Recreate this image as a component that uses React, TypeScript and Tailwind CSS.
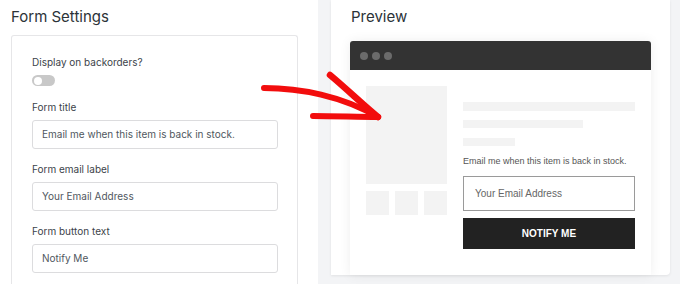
import React from "react";

function Field({ label, value }: { label: string; value: string }) {
  return (
    <div className="flex flex-col">
      <div className="text-[10px] leading-[14px] text-[#3c434a]">{label}</div>
      <div className="mt-[6px] flex h-[29px] w-[246px] items-center rounded-[3px] border border-[#dcdcde] bg-white pl-[9px] text-[10px] text-[#50575e]">
        {value}
      </div>
    </div>
  );
}

function Arrow() {
  return (
    <svg
      className="pointer-events-none absolute left-0 top-0"
      width="680"
      height="284"
      viewBox="0 0 680 284"
    >
      <g fill="none" stroke="#f20d0d" strokeLinecap="round" strokeLinejoin="round">
        <path strokeWidth="6" d="M264 88 C 300 88, 342 96, 378 117" />
        <path strokeWidth="6.5" d="M330 75 C 348 90, 362 104, 378 117" />
        <path strokeWidth="6" d="M313 116 C 335 116, 358 117, 378 117" />
      </g>
    </svg>
  );
}

export default function App() {
  return (
    <div
      className="relative flex h-[284px] w-[680px] overflow-hidden bg-[#f3f4f6]"
      style={{ fontFamily: "Inter, 'Liberation Sans', sans-serif" }}
    >
      <div className="flex h-full w-[318px] flex-col bg-white pl-[11px] pt-[7px]">
        <h2 className="text-[15px] leading-[20px] text-[#2c3338]">Form Settings</h2>
        <div className="mt-[8px] flex w-[287px] flex-1 flex-col gap-[13px] rounded-t-[3px] border border-b-0 border-[#e6e6e8] pl-[20px] pt-[19px]">
          <div className="flex flex-col pb-[1px]">
            <div className="text-[10px] leading-[14px] text-[#3c434a]">Display on backorders?</div>
            <div className="mt-[6px] flex h-[11px] w-[23px] items-center rounded-full bg-[#c8c8c8] px-[2px]">
              <div className="h-[8px] w-[8px] rounded-full bg-white" />
            </div>
          </div>
          <Field label="Form title" value="Email me when this item is back in stock." />
          <Field label="Form email label" value="Your Email Address" />
          <Field label="Form button text" value="Notify Me" />
        </div>
      </div>

      <div className="ml-[13px] flex h-[275px] w-[339px] flex-col rounded-br-[4px] bg-white pl-[19px] pt-[7px] shadow-[0_1px_3px_rgba(0,0,0,0.08)]">
        <h2 className="pl-[1px] text-[15px] leading-[20px] text-[#2c3338]">Preview</h2>
        <div className="mt-[14px] flex w-[301px] flex-1 flex-col overflow-hidden rounded-t-[3px] bg-white shadow-[0_0_12px_rgba(0,0,0,0.07)]">
          <div className="flex h-[29px] items-center gap-[4px] bg-[#333333] pl-[10px]">
            <span className="h-[8px] w-[8px] rounded-full bg-[#6b6b6b]" />
            <span className="h-[8px] w-[8px] rounded-full bg-[#6b6b6b]" />
            <span className="h-[8px] w-[8px] rounded-full bg-[#6b6b6b]" />
          </div>
          <div className="flex gap-[16px] pl-[16px] pt-[16px]">
            <div className="flex w-[81px] flex-col gap-[7px]">
              <div className="h-[98px] bg-[#f3f3f3]" />
              <div className="flex gap-[6px]">
                <div className="h-[24px] w-[23px] bg-[#f3f3f3]" />
                <div className="h-[24px] w-[23px] bg-[#f3f3f3]" />
                <div className="h-[24px] w-[23px] bg-[#f3f3f3]" />
              </div>
            </div>
            <div
              className="flex w-[172px] flex-col"
              style={{ fontFamily: "'Liberation Sans', Arial, sans-serif" }}
            >
              <div className="mt-[16px] h-[9px] w-[172px] bg-[#f3f3f3]" />
              <div className="mt-[9px] h-[8px] w-[120px] bg-[#f3f3f3]" />
              <div className="mt-[10px] h-[8px] w-[52px] bg-[#f3f3f3]" />
              <div className="mt-[9px] text-[9px] leading-[12px] text-[#555]">
                Email me when this item is back in stock.
              </div>
              <div className="mt-[9px] flex h-[35px] items-center border border-[#9a9a9a] pl-[11px] text-[10px] text-[#666]">
                Your Email Address
              </div>
              <div className="mt-[7px] flex h-[31px] items-center justify-center bg-[#222222] text-[10px] font-semibold text-white">
                NOTIFY ME
              </div>
            </div>
          </div>
        </div>
      </div>

      <Arrow />
    </div>
  );
}
